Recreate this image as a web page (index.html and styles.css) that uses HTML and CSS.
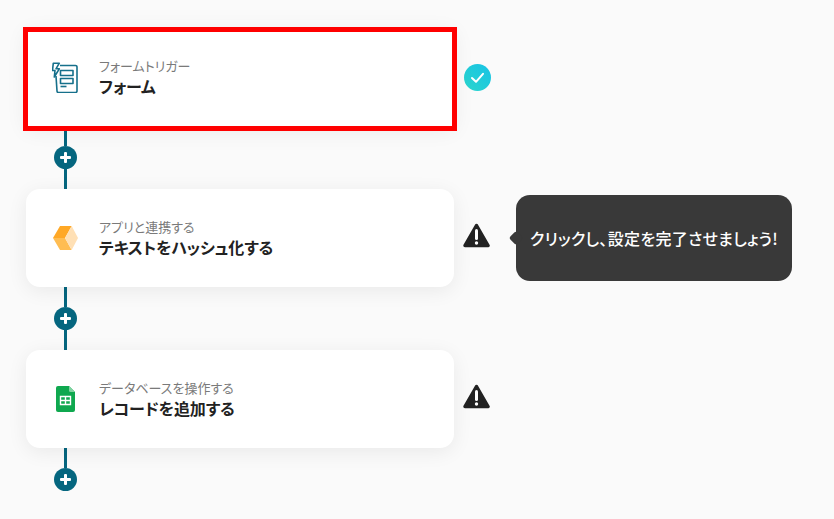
FILE: index.html
```html
<!DOCTYPE html>
<html lang="ja">
<head>
    <meta charset="UTF-8">
    <meta name="viewport" content="width=device-width, initial-scale=1.0">
    <title>フロー</title>
    <link rel="stylesheet" href="styles.css">
</head>
<body>
    <div class="flow">
        <!-- Trigger -->
        <div class="step">
            <div class="card card-selected">
                <div class="card-icon">
                    <svg width="27" height="31" viewBox="0 0 27 31" fill="none" stroke="#16708b" stroke-width="1.600" stroke-linejoin="round">
                        <path d="M8 3.500h15.500a1.500 1.500 0 0 1 1.500 1.500v24a1.500 1.500 0 0 1-1.500 1.500h-17a1.500 1.500 0 0 1-1.500-1.500L4 14"/>
                        <path d="M1.300 1.200h6L4 6.800h3.300L2.300 15 3 8.500H.5z" fill="#fff"/>
                        <rect x="8.500" y="8.500" width="12.500" height="5"/>
                        <rect x="8.500" y="16.500" width="12.500" height="5"/>
                        <path d="M8.500 24.500h6"/>
                    </svg>
                </div>
                <div class="card-text">
                    <div class="card-sub">フォームトリガー</div>
                    <div class="card-title">フォーム</div>
                </div>
            </div>
            <svg class="status" width="27" height="27" viewBox="0 0 27 27">
                <defs>
                    <linearGradient id="checkFill" x1="0" y1="1" x2="1" y2="0">
                        <stop offset="0" stop-color="#2bd6cc"/>
                        <stop offset="1" stop-color="#17c2e6"/>
                    </linearGradient>
                </defs>
                <circle cx="13.500" cy="13.500" r="13.500" fill="url(#checkFill)"/>
                <path d="M8 14l4 3.800 7-8" fill="none" stroke="#fff" stroke-width="2" stroke-linecap="round" stroke-linejoin="round"/>
            </svg>
        </div>

        <div class="connector">
            <div class="line"></div>
            <div class="add-btn"></div>
            <div class="line"></div>
        </div>

        <!-- Hash step -->
        <div class="step">
            <div class="card">
                <div class="card-icon">
                    <svg width="25" height="24" viewBox="0 0 25 24">
                        <path d="M0 12L7 0h11.700L12 12z" fill="#ffa826"/>
                        <path d="M0 12h12l6.700 12H7z" fill="#ffbd52"/>
                        <path d="M18.700 0L25 12l-6.300 12L12 12z" fill="#ffe0b5"/>
                    </svg>
                </div>
                <div class="card-text">
                    <div class="card-sub">アプリと連携する</div>
                    <div class="card-title">テキストをハッシュ化する</div>
                </div>
            </div>
            <svg class="status status-warn" width="27" height="25" viewBox="0 0 27 25">
                <path d="M13.500 2.500L25 22.500H2z" fill="#222" stroke="#222" stroke-width="3.500" stroke-linejoin="round"/>
                <path d="M13.500 7.500v8" stroke="#fff" stroke-width="3" stroke-linecap="round"/>
                <circle cx="13.500" cy="20" r="1.700" fill="#fff"/>
            </svg>
            <div class="tooltip">クリックし、設定を完了させましょう!</div>
        </div>

        <div class="connector">
            <div class="line"></div>
            <div class="add-btn"></div>
            <div class="line"></div>
        </div>

        <!-- Spreadsheet step -->
        <div class="step">
            <div class="card">
                <div class="card-icon">
                    <svg width="19" height="26" viewBox="0 0 19 26">
                        <path d="M2 0h11l6 6v18a2 2 0 0 1-2 2H2a2 2 0 0 1-2-2V2a2 2 0 0 1 2-2z" fill="#0fa84f"/>
                        <path d="M13 0l6 6h-4.500A1.500 1.500 0 0 1 13 4.500z" fill="#7fd3a0"/>
                        <path d="M4.500 10.500h10v8h-10zM4.500 14.500h10M9.500 10.500v8" fill="none" stroke="#fff" stroke-width="1.400"/>
                    </svg>
                </div>
                <div class="card-text">
                    <div class="card-sub">データベースを操作する</div>
                    <div class="card-title">レコードを追加する</div>
                </div>
            </div>
            <svg class="status status-warn" width="27" height="25" viewBox="0 0 27 25">
                <path d="M13.500 2.500L25 22.500H2z" fill="#222" stroke="#222" stroke-width="3.500" stroke-linejoin="round"/>
                <path d="M13.500 7.500v8" stroke="#fff" stroke-width="3" stroke-linecap="round"/>
                <circle cx="13.500" cy="20" r="1.700" fill="#fff"/>
            </svg>
        </div>

        <div class="connector connector-end">
            <div class="line"></div>
            <div class="add-btn"></div>
        </div>
    </div>
</body>
</html>
```

FILE: styles.css
```css
/* General Styles */
body {
    font-family: "Noto Sans CJK JP", "Noto Sans", sans-serif;
    margin: 0;
    padding: 0;
    background-color: #fafafa;
    color: #222;
    overflow: hidden;
    font-feature-settings: "palt";
}

.flow {
    display: flex;
    flex-direction: column;
    padding: 28px 0 0 26px;
}

/* Step row */
.step {
    display: flex;
    align-items: center;
}

.card {
    position: relative;
    box-sizing: border-box;
    width: 428px;
    height: 98px;
    display: flex;
    align-items: center;
    gap: 20px;
    padding-left: 26px;
    background-color: white;
    border-radius: 14px;
    box-shadow: 0 4px 20px rgba(0, 0, 0, 0.07);
}

.card-selected {
    border-radius: 0;
}

.card-selected::after {
    content: "";
    position: absolute;
    top: -1px;
    left: -3px;
    right: -3px;
    bottom: -5px;
    border: 5px solid #ff0000;
}

.card-icon {
    width: 27px;
    display: flex;
    justify-content: center;
}

.card-sub {
    font-size: 13px;
    line-height: 18px;
    color: #7a7a7a;
}

.card-title {
    margin-top: 1px;
    font-size: 16px;
    line-height: 21px;
    font-weight: 700;
    letter-spacing: -0.1px;
}

.status {
    margin-left: 10px;
    flex-shrink: 0;
}

.status-warn {
    margin-left: 9px;
    margin-right: 1px;
    margin-bottom: 5px;
}

/* Tooltip */
.tooltip {
    position: relative;
    box-sizing: border-box;
    width: 276px;
    height: 86px;
    margin-left: 25px;
    display: flex;
    align-items: center;
    justify-content: center;
    background-color: #393939;
    border-radius: 14px;
    color: white;
    font-size: 16px;
    font-weight: 500;
    letter-spacing: 0.3px;
}

.tooltip::before {
    content: "";
    position: absolute;
    left: -5px;
    top: 38px;
    width: 10px;
    height: 10px;
    background-color: #393939;
    border-radius: 2px;
    transform: rotate(45deg);
}

/* Connector */
.connector {
    width: 23px;
    height: 63px;
    margin-left: 28px;
    display: flex;
    flex-direction: column;
    align-items: center;
}

.connector-end {
    height: 43px;
}

.line {
    width: 3px;
    flex: 1;
    background-color: #05667f;
}

.add-btn {
    position: relative;
    width: 23px;
    height: 23px;
    border-radius: 50%;
    background-color: #05667f;
}

.add-btn::before,
.add-btn::after {
    content: "";
    position: absolute;
    background-color: white;
    border-radius: 1px;
}

.add-btn::before {
    left: 6px;
    top: 10px;
    width: 11px;
    height: 3px;
}

.add-btn::after {
    left: 10px;
    top: 6px;
    width: 3px;
    height: 11px;
}
```
